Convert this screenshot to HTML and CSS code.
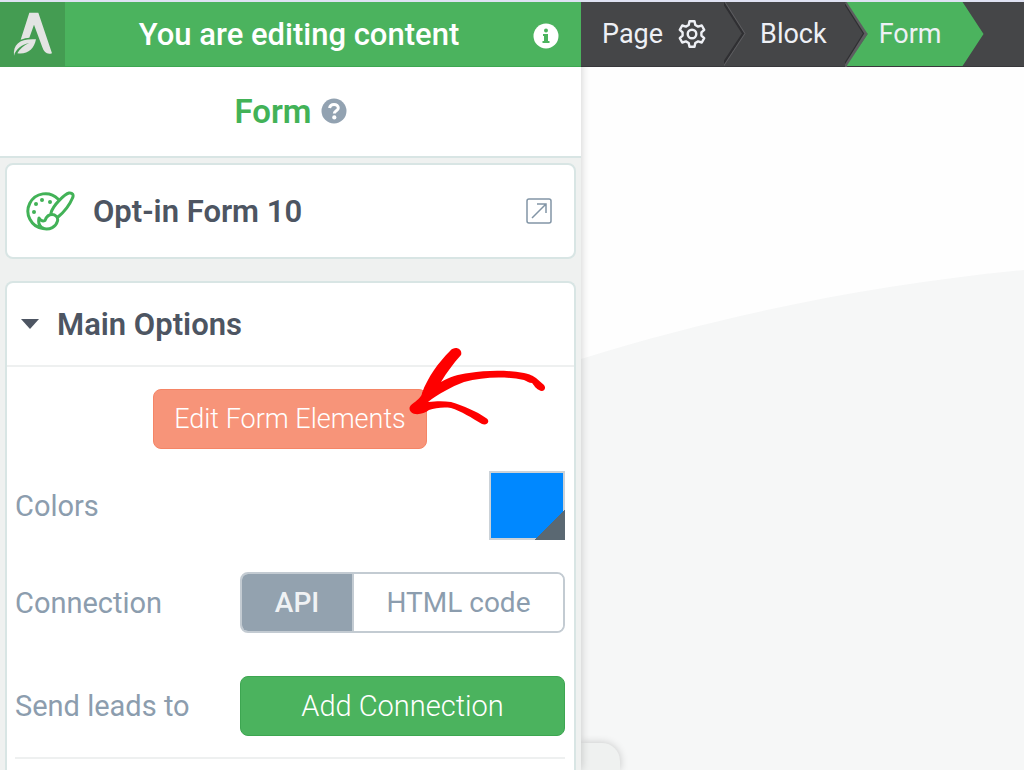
FILE: index.html
```html
<!DOCTYPE html>
<html lang="en">
<head>
    <meta charset="UTF-8">
    <meta name="viewport" content="width=device-width, initial-scale=1.0">
    <title>Form - Editor</title>
    <link rel="stylesheet" href="styles.css">
</head>
<body>

<div class="editor">
    <aside class="sidebar">
        <header class="topbar">
            <a class="logo" href="#" aria-label="Dashboard">
                <svg width="40" height="44" viewBox="36 36 120 132">
                    <path d="M85 38H112L153 160C139 165 129 158 124 142L99 74L85 113C77 113 69 115 59 119Z" fill="#e3e4e3"/>
                    <path d="M39 167C36 132 57 115 105 118C99 148 80 164 49 160C56 148 68 136 84 129C62 134 44 148 39 167Z" fill="#e3e4e3"/>
                </svg>
            </a>
            <span class="topbar-text">You are editing content</span>
            <button class="icon-btn info" aria-label="Info">
                <svg width="26" height="26" viewBox="0 0 26 26">
                    <circle cx="13" cy="13" r="12.5" fill="#fff"/>
                    <circle cx="13" cy="7.5" r="2" fill="#4bb35e"/>
                    <path d="M10 11h5v7h1.5v2h-7v-2H11v-5h-1z" fill="#4bb35e"/>
                </svg>
            </button>
        </header>

        <div class="title">
            <h1>Form</h1>
            <button class="icon-btn help" aria-label="Help">
                <svg width="26" height="26" viewBox="0 0 26 26">
                    <circle cx="13" cy="13" r="12.5" fill="#92a2b1"/>
                    <path d="M8.500 10C9 7.500 10.800 6.400 13 6.400C15.500 6.400 17.300 7.900 17.300 10C17.300 12.800 13.300 12.800 13.300 15.600" fill="none" stroke="#fff" stroke-width="3"/>
                    <circle cx="13.300" cy="19.400" r="2.100" fill="#fff"/>
                </svg>
            </button>
        </div>

        <div class="panels">
            <section class="card element">
                <svg class="palette" width="50" height="40" viewBox="0 0 50 40" fill="none" stroke="#42b257" stroke-width="3" stroke-linecap="round" stroke-linejoin="round">
                    <path d="M33 8A17.500 17.500 0 1 0 18 37.500C25 39 31 36 32.500 30C33.500 26 30 23.500 27 23.500C22 23.500 21 27 20 29.500C18 30.500 16 30 14 27C13 32 14 36 19 37.500"/>
                    <path d="M26 22C28 14 40 3 44 2C47.500 1.500 49 4 47.500 7C45 13 39 21 33 26"/>
                    <g fill="#42b257" stroke="none">
                        <circle cx="9" cy="21" r="2"/>
                        <circle cx="11" cy="13" r="2"/>
                        <circle cx="17" cy="9" r="2"/>
                        <circle cx="25" cy="11" r="2"/>
                    </g>
                </svg>
                <h2>Opt-in Form 10</h2>
                <button class="icon-btn" aria-label="Open template">
                    <svg width="26" height="26" viewBox="0 0 26 26" fill="none" stroke="#8295a6" stroke-width="1.500">
                        <rect x="1" y="1" width="24" height="24" rx="2"/>
                        <path d="M6 20L20 6M11 6H20V15"/>
                    </svg>
                </button>
            </section>

            <section class="card options">
                <div class="options-head">
                    <svg width="18" height="10" viewBox="0 0 18 10"><path d="M0 0H18L9 10Z" fill="#4d5562"/></svg>
                    <h2>Main Options</h2>
                </div>
                <div class="options-body">
                    <div class="edit">
                        <button class="btn orange">Edit Form Elements</button>
                        <svg class="arrow" width="145" height="85" viewBox="0 0 145 85">
                            <path d="M44 6C49 0 57 4 55 10C47 19 41 27 35 37C43 32 53 29 63 28C82 25 101 25 118 28C124 29 127 31 130 33L138 40C141 44 137 48 133 45C129 43 128 40 126 38C123 38 121 36 118 35C98 31 77 32 58 37C45 42 32 49 22 57C31 56 38 56 45 57C58 61 70 66 80 73C85 76 81 81 76 79C66 73 55 66 45 63C37 62 29 63 23 65C18 69 9 71 5 67C1 62 6 59 9 57C14 53 16 50 16 48C22 32 32 18 44 6Z" fill="#fe0000"/>
                        </svg>
                    </div>
                    <div class="row colors">
                        <label for="color">Colors</label>
                        <span class="swatch"><input type="color" id="color" value="#0088ff"></span>
                    </div>
                    <div class="row connection">
                        <span id="connection">Connection</span>
                        <div class="toggle" role="group" aria-labelledby="connection">
                            <button class="active" aria-pressed="true">API</button>
                            <button aria-pressed="false">HTML code</button>
                        </div>
                    </div>
                    <div class="row leads">
                        <span>Send leads to</span>
                        <button class="btn green">Add Connection</button>
                    </div>
                </div>
            </section>
        </div>
    </aside>

    <main class="preview">
        <nav class="crumbs">
            <a href="#">Page
                <svg width="28" height="28" viewBox="0 0 28 28" fill="none" stroke="#eef0f5" stroke-width="2.400" stroke-linejoin="round">
                    <path d="M10.700 5L11.500 1.300H16.500L17.300 5L20.100 6.600L23.800 5.500L26.200 9.800L23.400 12.400V15.600L26.200 18.200L23.800 22.500L20.100 21.400L17.300 23L16.500 26.700H11.500L10.700 23L7.900 21.400L4.200 22.500L1.800 18.200L4.600 15.600V12.400L1.800 9.800L4.200 5.500L7.900 6.600Z"/>
                    <circle cx="14" cy="14" r="4.300"/>
                </svg>
            </a>
            <svg width="22" height="65" viewBox="0 0 22 65" fill="none">
                <path d="M-1 0L19 31.500L-3 65" stroke="#2f2f32" stroke-width="2"/>
                <path d="M1 0L21 31.500L-1 65" stroke="#5d5d60"/>
            </svg>
            <a href="#">Block</a>
            <svg width="22" height="65" viewBox="0 0 22 65" fill="none">
                <path d="M-1 0L19 31.500L-2 65" stroke="#2f2f32" stroke-width="2"/>
                <path d="M1 0L21 31.500L0 65" stroke="#5d5d60" stroke-width="3"/>
            </svg>
            <a class="current" href="#">Form</a>
        </nav>
        <div class="canvas">
            <svg class="curve" viewBox="0 0 443 703" preserveAspectRatio="none">
                <path d="M0 292C150 245 300 217 443 203V703H0Z" fill="#f6f7f7"/>
            </svg>
            <div class="tab"></div>
        </div>
    </main>
</div>

</body>
</html>
```

FILE: styles.css
```css
* {
    box-sizing: border-box;
}
body {
    margin: 0;
    font-family: Roboto, "Liberation Sans", sans-serif;
    font-size: 29px;
    color: #8c9dae;
    background: #fff;
}
h1, h2 {
    margin: 0;
    font-size: 31px;
    font-weight: 600;
}
h2 {
    color: #4d5562;
}
a {
    color: inherit;
    text-decoration: none;
}
button {
    font: inherit;
    color: inherit;
    cursor: pointer;
}
svg {
    display: block;
    flex-shrink: 0;
}
.editor {
    display: flex;
    height: 100vh;
    border-top: 2px solid #dfe2f3;
    overflow: hidden;
}

/* sidebar */
.sidebar {
    flex: 0 0 581px;
    display: flex;
    flex-direction: column;
    background: #eff1f0;
    box-shadow: 0 0 9px rgba(0, 0, 0, 0.2);
    position: relative;
    z-index: 1;
}
.topbar {
    display: flex;
    align-items: center;
    height: 65px;
    flex-shrink: 0;
    background: #4bb35e;
    border-bottom: 1px solid #3da651;
    color: #fff;
    font-size: 31px;
    font-weight: 500;
}
.logo {
    display: flex;
    align-items: center;
    justify-content: center;
    width: 65px;
    height: 65px;
    background: #449c52;
}
.topbar-text {
    flex: 1;
    text-align: center;
}
.icon-btn {
    padding: 0;
    border: none;
    background: none;
}
.info {
    margin: 4px 22px 0 0;
}
.title {
    display: flex;
    align-items: center;
    justify-content: center;
    gap: 9px;
    height: 91px;
    flex-shrink: 0;
    background: #fff;
    border-bottom: 2px solid #d8e5e4;
}
.title h1 {
    color: #42b257;
    font-size: 33px;
}
.help {
    margin-bottom: 2px;
}
.panels {
    flex: 1;
    display: flex;
    flex-direction: column;
    gap: 22px;
    padding: 5px 5px 0;
    min-height: 0;
}
.card {
    background: #fff;
    border: 2px solid #d8e5e4;
    border-radius: 8px;
}
.element {
    display: flex;
    align-items: center;
    gap: 18px;
    height: 96px;
    padding: 0 22px 0 18px;
    flex-shrink: 0;
}
.element h2 {
    flex: 1;
}
.options {
    flex: 1;
    border-bottom: none;
    border-radius: 8px 8px 0 0;
}
.options-head {
    display: flex;
    align-items: center;
    gap: 18px;
    height: 84px;
    padding-left: 14px;
    border-bottom: 2px solid #eef0f0;
}
.options-body {
    padding: 22px 9px 0 8px;
}
.btn {
    height: 60px;
    border: 1px solid #3da651;
    border-radius: 8px;
    color: #fff;
    font-weight: 300;
}
.orange {
    padding: 0 20px;
    background: #f79479;
    border-color: #f58566;
    font-size: 27px;
}
.green {
    width: 325px;
    background: #4bb35e;
}
.edit {
    position: relative;
    width: fit-content;
    margin: 0 auto;
}
.arrow {
    position: absolute;
    top: -44px;
    right: -124px;
}
.row {
    display: flex;
    align-items: center;
    justify-content: space-between;
}
.colors {
    margin-top: 22px;
}
.swatch {
    position: relative;
    width: 76px;
    height: 69px;
}
.swatch input {
    display: block;
    width: 100%;
    height: 100%;
    padding: 0;
    border: 2px solid #cbd2d8;
    background: none;
}
.swatch input::-webkit-color-swatch-wrapper {
    padding: 0;
}
.swatch input::-webkit-color-swatch {
    border: none;
}
.swatch::after {
    content: "";
    position: absolute;
    right: 0;
    bottom: 0;
    width: 31px;
    height: 31px;
    background: linear-gradient(135deg, transparent 50%, #5a6872 50%);
    pointer-events: none;
}
.connection {
    margin-top: 32px;
}
.toggle {
    display: flex;
    width: 325px;
    height: 61px;
    border: 2px solid #c3cbd2;
    border-radius: 8px;
    overflow: hidden;
    font-size: 28px;
}
.toggle button {
    flex: 1;
    border: none;
    background: #fff;
}
.toggle .active {
    flex: 0 0 112px;
    background: #93a2af;
    border-right: 2px solid #c3cbd2;
    color: #f0f2f4;
    font-weight: 500;
}
.leads {
    margin-top: 43px;
    padding-bottom: 21px;
    border-bottom: 2px solid #eef0f0;
}

/* preview */
.preview {
    flex: 1;
    display: flex;
    flex-direction: column;
    min-width: 0;
}
.crumbs {
    display: flex;
    height: 65px;
    flex-shrink: 0;
    background: #454648;
    border-bottom: 1px solid #38383b;
    color: #eef0f5;
    font-size: 27px;
    position: relative;
    z-index: 2;
}
.crumbs a {
    display: flex;
    align-items: center;
    gap: 15px;
    padding: 0 18px 0 14px;
}
.crumbs a:first-child {
    padding-left: 21px;
}
.crumbs .current {
    margin-left: -20px;
    padding: 0 42px 0 32px;
    background: #4bb35e;
    clip-path: polygon(0 0, calc(100% - 21px) 0, 100% 50%, calc(100% - 21px) 100%, 0 100%, 21px 50%);
}
.canvas {
    flex: 1;
    position: relative;
    background: #fefefe;
}
.curve {
    width: 100%;
    height: 100%;
}
.tab {
    position: absolute;
    left: 0;
    bottom: 0;
    width: 39px;
    height: 27px;
    background: #eff1f0;
    border-radius: 0 18px 0 0;
    box-shadow: 0 0 9px rgba(0, 0, 0, 0.2);
}
```
